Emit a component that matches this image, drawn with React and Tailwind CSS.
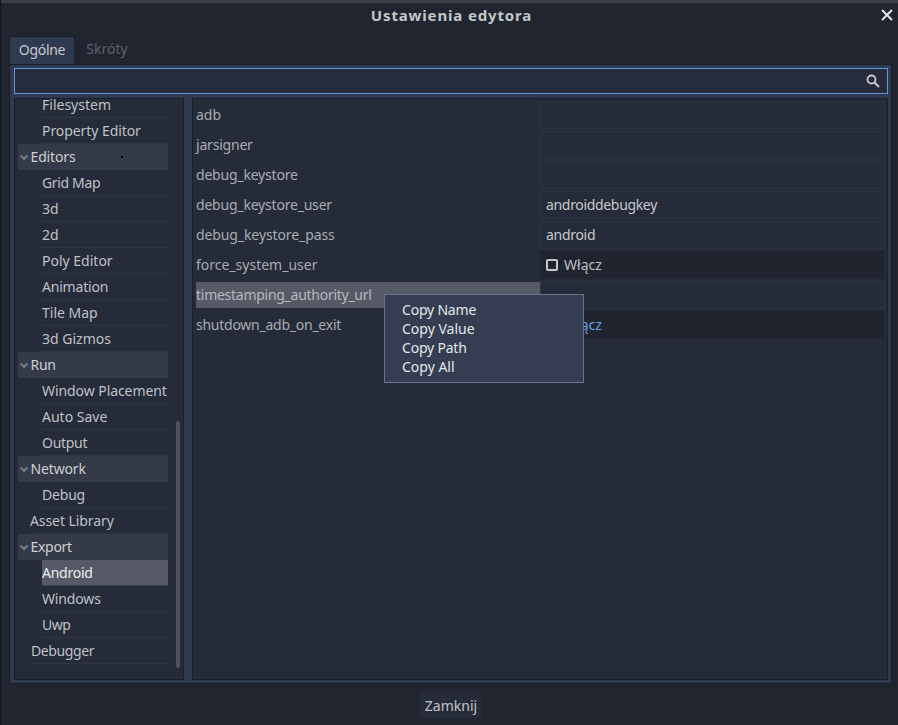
const treeRows = [
  { label: 'Filesystem', level: 2 },
  { label: 'Property Editor', level: 2, fit: 'tracking-[-0.07px]' },
  { label: 'Editors', head: true, fit: 'tracking-[-0.15px]' },
  { label: 'Grid Map', level: 2, fit: 'tracking-[-0.35px]' },
  { label: '3d', level: 2 },
  { label: '2d', level: 2 },
  { label: 'Poly Editor', level: 2 },
  { label: 'Animation', level: 2, fit: 'tracking-[-0.2px]' },
  { label: 'Tile Map', level: 2 },
  { label: '3d Gizmos', level: 2 },
  { label: 'Run', head: true, fit: 'tracking-[-0.3px]' },
  { label: 'Window Placement', level: 2, fit: 'tracking-[-0.07px]' },
  { label: 'Auto Save', level: 2 },
  { label: 'Output', level: 2, fit: 'tracking-[-0.3px]' },
  { label: 'Network', head: true, fit: 'tracking-[-0.15px]' },
  { label: 'Debug', level: 2, fit: 'tracking-[-0.2px]' },
  { label: 'Asset Library', level: 1, fit: 'tracking-[-0.08px]' },
  { label: 'Export', head: true, fit: 'tracking-[-0.3px]' },
  { label: 'Android', level: 2, selected: true, fit: 'tracking-[-0.25px]' },
  { label: 'Windows', level: 2, fit: 'tracking-[-0.15px]' },
  { label: 'Uwp', level: 2, fit: 'tracking-[-0.5px]' },
  { label: 'Debugger', level: 1, fit: 'ml-px tracking-[-0.4px]' },
];

const props = [
  { name: 'adb', type: 'text', value: '' },
  { name: 'jarsigner', type: 'text', value: '', fit: 'tracking-[-0.2px]' },
  { name: 'debug_keystore', type: 'text', value: '', fit: 'tracking-[-0.2px]' },
  { name: 'debug_keystore_user', type: 'text', value: 'androiddebugkey', fit: 'tracking-[-0.2px]', valueFit: 'tracking-[-0.33px]' },
  { name: 'debug_keystore_pass', type: 'text', value: 'android', fit: 'tracking-[-0.1px]', valueFit: 'tracking-[-0.3px]' },
  { name: 'force_system_user', type: 'check', value: 'Włącz' },
  { name: 'timestamping_authority_url', type: 'text', value: '', hover: true, fit: 'tracking-[-0.27px]' },
  { name: 'shutdown_adb_on_exit', type: 'check', value: 'Włącz', on: true, fit: 'tracking-[-0.25px]' },
];

const menuItems = [
  { label: 'Copy Name', fit: 'tracking-[-0.2px]' },
  { label: 'Copy Value' },
  { label: 'Copy Path', fit: 'tracking-[-0.2px]' },
  { label: 'Copy All' },
];

const Chevron = () => (
  <svg width="12" height="12" viewBox="0 0 12 12" className="shrink-0">
    <path d="M2.5 4.5 6 8l3.5-3.5" fill="none" stroke="#7c818c" strokeWidth="1.8" />
  </svg>
);

const TreeRow = ({ row }) => {
  if (row.head) {
    return (
      <div className="relative flex h-[26px] items-center bg-[#343a48] text-[#cdcfd2]">
        <Chevron />
        <span className={`ml-[0.5px] ${row.fit || ''}`}>{row.label}</span>
      </div>
    );
  }
  return (
    <div className={row.level === 2 ? 'pl-6' : 'pl-3'}>
      <div className={`flex h-[26px] items-center border-b ${row.selected ? 'border-[#3a404e] bg-[#555a66] text-[#eceded]' : 'border-[#2f3543] text-[#bfc1c6]'}`}>
        <span className={row.fit || ''}>{row.label}</span>
      </div>
    </div>
  );
};

const PropRow = ({ prop }) => (
  <div className="flex h-[30px] items-center">
    <div className={`flex h-[26px] w-[344px] items-center ${prop.hover ? 'bg-[#555a66] text-[#b6b8bd]' : 'text-[#a9abb1]'}`}>
      <span className={prop.fit || ''}>{prop.name}</span>
    </div>
    {prop.type === 'text' ? (
      <div className="flex h-[28px] w-[344px] items-center border border-[#2c3240] bg-[#252b39] pl-[5px] text-[#c6c8cc]">
        <span className={prop.valueFit || ''}>{prop.value}</span>
      </div>
    ) : (
      <div className="flex h-[28px] w-[344px] items-center gap-[6px] bg-[#1f242f] pl-[6px]">
        <span className="h-3 w-3 rounded-[2px] border-2 border-[#c4c6ca]" />
        <span className={prop.on ? 'text-[#6b9fe8]' : 'text-[#bfc1c6]'}>{prop.value}</span>
      </div>
    )}
  </div>
);

export default function App() {
  return (
    <div className="relative flex h-[725px] w-[898px] flex-col overflow-hidden border-l border-[#14171d] bg-[#20252f] text-sm font-['Noto_Sans',sans-serif]">
      <div className="h-[3px] shrink-0 bg-[#3b3f47]" />

      <div className="relative flex h-[26px] shrink-0 items-center justify-center pl-1 text-[15px] font-bold tracking-[0.85px] text-[#c4c6ca]">
        Ustawienia edytora
        <svg width="12" height="12" viewBox="0 0 12 12" className="absolute right-[5px] top-[6px]">
          <path d="M1 1l10 10M11 1 1 11" stroke="#e4e5e7" strokeWidth="2" />
        </svg>
      </div>

      <div className="flex h-[35px] shrink-0 items-end pl-2">
        <div className="flex h-7 w-[66px] items-center justify-center border-x border-t border-[#1a1e27] bg-[#2f394f] pb-[2px] text-[#c6c8cc]">
          <span className="tracking-[-0.3px]">Ogólne</span>
        </div>
        <div className="flex h-7 w-16 items-center justify-center pb-[2px] text-[#5b606b]">Skróty</div>
      </div>

      <div className="ml-2 mr-[6px] flex h-[620px] shrink-0 flex-col gap-1 border border-[#1a1e27] bg-[#2f394f] py-[3px] pl-1 pr-[3px]">
        <div className="flex h-[26px] shrink-0 items-center justify-end border border-[#5f97e0] bg-[#262c3b] pr-[7px]">
          <svg width="14" height="14" viewBox="0 0 14 14">
            <circle cx="5.5" cy="5.5" r="4" fill="none" stroke="#c8cacd" strokeWidth="1.8" />
            <path d="M8.5 8.5 13 13" stroke="#c8cacd" strokeWidth="2" />
          </svg>
        </div>

        <div className="flex min-h-0 flex-1 gap-2">
          <div className="relative w-[170px] shrink-0 overflow-hidden border border-[#1a1e27] bg-[#252b39]">
            <div className="ml-[3px] mt-[-7px] w-[150px]">
              {treeRows.map((row) => (
                <TreeRow key={row.label} row={row} />
              ))}
            </div>
            <div className="absolute left-[161px] top-[322px] h-[247px] w-1 rounded-sm bg-[#4d525e]" />
            <div className="absolute left-[106px] top-[57px] h-[2px] w-[2px] bg-black" />
          </div>

          <div className="min-w-0 flex-1 border border-[#1a1e27] bg-[#252b39] pl-[3px] pt-[1px]">
            {props.map((prop) => (
              <PropRow key={prop.name} prop={prop} />
            ))}
          </div>
        </div>
      </div>

      <div className="flex flex-1 items-start justify-center pl-[3px] pt-[9px]">
        <div className="flex h-[25px] w-[62px] items-center justify-center bg-[#262b38] text-[#c0c2c7]">Zamknij</div>
      </div>

      <div className="absolute left-[383px] top-[294px] flex h-[89px] w-[200px] flex-col border border-[#6c7588] bg-[#343d52] pl-[17px] pt-[5px] text-[#e6e7e9]">
        {menuItems.map((item) => (
          <div key={item.label} className="flex h-[19px] items-center">
            <span className={item.fit || ''}>{item.label}</span>
          </div>
        ))}
      </div>
    </div>
  );
}
